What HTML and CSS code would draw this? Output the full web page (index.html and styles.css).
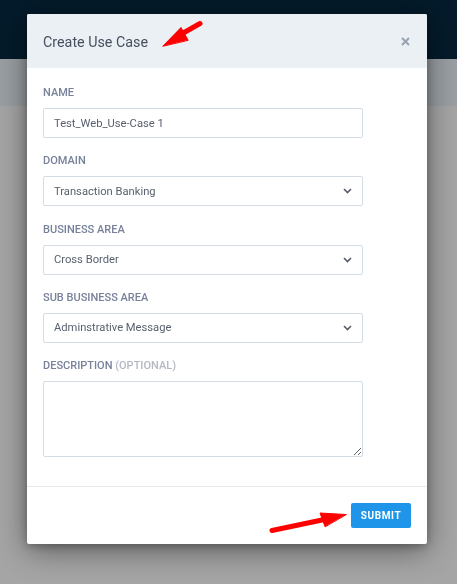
FILE: index.html
```html
<!DOCTYPE html>
<html>
<head>
<meta charset="utf-8">
<link rel="stylesheet" href="styles.css">
</head>
<body>
<div class="page">
  <div class="topbar"></div>
  <div class="subbar"></div>
</div>
<div class="overlay">
  <div class="modal">
    <div class="modal-header">
      <span class="title">Create Use Case</span>
      <svg class="close" width="9" height="9" viewBox="0 0 9 9"><path d="M1 1l7 7M8 1l-7 7" stroke="#97a3b1" stroke-width="2"/></svg>
    </div>
    <div class="modal-body">
      <div class="group">
        <label class="label">Name</label>
        <input class="field" type="text" value="Test_Web_Use-Case 1">
      </div>
      <div class="group">
        <label class="label">Domain</label>
        <div class="select"><span>Transaction Banking</span><svg class="chev" width="9" height="6" viewBox="0 0 9 6"><path d="M1 1l3.5 3.5L8 1" fill="none" stroke="#555c66" stroke-width="1.6"/></svg></div>
      </div>
      <div class="group">
        <label class="label">Business Area</label>
        <div class="select"><span>Cross Border</span><svg class="chev" width="9" height="6" viewBox="0 0 9 6"><path d="M1 1l3.5 3.5L8 1" fill="none" stroke="#555c66" stroke-width="1.6"/></svg></div>
      </div>
      <div class="group">
        <label class="label">Sub Business Area</label>
        <div class="select"><span>Adminstrative Message</span><svg class="chev" width="9" height="6" viewBox="0 0 9 6"><path d="M1 1l3.5 3.5L8 1" fill="none" stroke="#555c66" stroke-width="1.6"/></svg></div>
      </div>
      <div class="group last">
        <label class="label">Description <span class="opt">(Optional)</span></label>
        <textarea class="area"></textarea>
      </div>
    </div>
    <div class="modal-footer">
      <button class="submit">SUBMIT</button>
    </div>
  </div>
  <svg class="arrows" width="457" height="584" viewBox="0 0 457 584">
    <g fill="#ff0000" stroke="#ff0000" stroke-linecap="round" stroke-linejoin="round">
      <line x1="200" y1="23.5" x2="178" y2="36" stroke-width="5"/>
      <polygon points="163,46 181,27.5 188,40" stroke-width="1"/>
      <line x1="272" y1="530.5" x2="322" y2="520" stroke-width="5"/>
      <polygon points="346,514.5 320,513 325,526.5" stroke-width="1"/>
    </g>
  </svg>
</div>
</body>
</html>
```

FILE: styles.css
```css
* { box-sizing: border-box; }
html, body { margin: 0; padding: 0; }
body {
  width: 457px;
  height: 584px;
  overflow: hidden;
  background: #a5a5a5;
  font-family: Roboto, "Liberation Sans", sans-serif;
}
.page { display: flex; flex-direction: column; }
.topbar { height: 59px; background: #041b2b; }
.subbar { height: 47px; background: #9a9fa3; }

.overlay {
  position: fixed;
  inset: 0;
  padding: 14px 0 0 27px;
}
.modal {
  width: 400px;
  background: #fff;
  border-radius: 2px;
  box-shadow: 0 6px 30px rgba(0,0,0,0.45), 0 2px 8px rgba(0,0,0,0.25);
  overflow: hidden;
}
.modal-header {
  height: 54px;
  background: #ebf0f5;
  display: flex;
  align-items: center;
  justify-content: space-between;
  padding: 0 17px 0 16px;
}
.title {
  font-size: 14.3px;
  color: #46505e;
  padding-top: 1px;
}
.close { display: block; }
.modal-body {
  padding: 18px 64px 13px 16px;
}
.group { margin-bottom: 16.25px; }
.group.last { margin-bottom: 16px; }
.label {
  display: block;
  font-size: 11px;
  line-height: 14px;
  font-weight: 500;
  text-transform: uppercase;
  color: #77819a;
  margin-bottom: 8px;
}
.opt { color: #b3b9c3; }
.field, .select {
  display: flex;
  align-items: center;
  width: 320px;
  height: 30px;
  border: 1px solid #d4dce6;
  border-radius: 2px;
  padding: 0 10px;
  font-family: Roboto, "Liberation Sans", sans-serif;
  font-size: 11.2px;
  color: #59616e;
  background: #fff;
  outline: none;
}
.select { justify-content: space-between; }
.area {
  display: block;
  width: 320px;
  height: 76px;
  border: 1px solid #d4dce6;
  border-radius: 2px;
  resize: vertical;
  outline: none;
  margin: 0;
}
.modal-footer {
  border-top: 1px solid #e6e9ed;
  display: flex;
  justify-content: flex-end;
  padding: 16px 16px 16px 16px;
}
.submit {
  width: 60px;
  height: 25px;
  border: none;
  border-radius: 2px;
  background: #1f95e9;
  color: #fff;
  font-family: Roboto, "Liberation Sans", sans-serif;
  font-size: 10px;
  font-weight: 700;
  letter-spacing: 0.6px;
  padding: 0;
}
.arrows {
  position: absolute;
  left: 0;
  top: 0;
  pointer-events: none;
}
```
